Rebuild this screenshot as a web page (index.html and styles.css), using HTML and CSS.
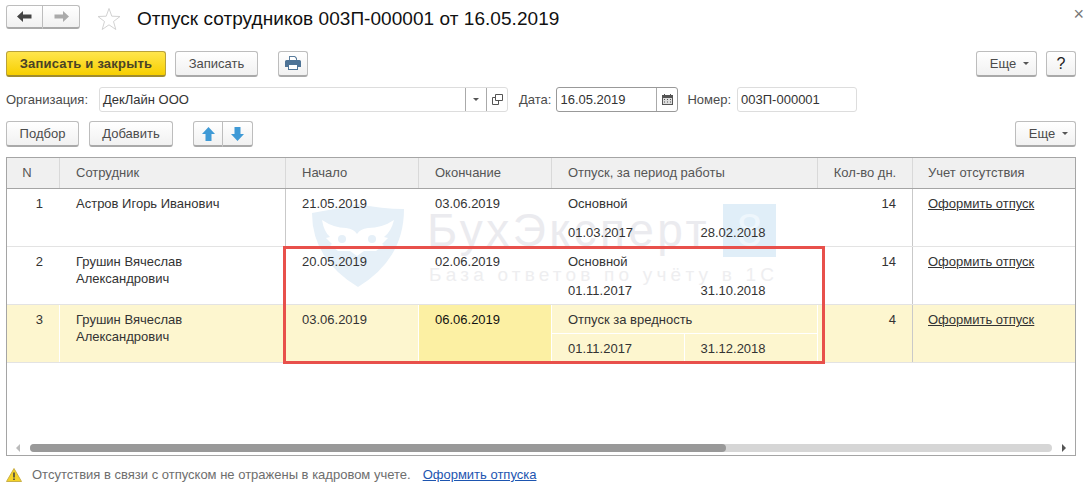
FILE: index.html
```html
<!DOCTYPE html>
<html lang="ru">

<head>
    <title>Отпуск сотрудников</title>
    <meta charset="UTF-8">
    <link rel="stylesheet" href="styles.css">
</head>

<body>
    <div class="topbar">
        <div class="btn-group nav-group">
            <button class="btn nav-btn">
                <svg width="15" height="11" viewBox="0 0 15 11"><path d="M0 5.500 6 0v3.500h8.500v4H6V11z" fill="#444"/></svg>
            </button>
            <button class="btn nav-btn">
                <svg width="15" height="11" viewBox="0 0 15 11"><path d="M15 5.500 9 0v3.500H.5v4H9V11z" fill="#aaa"/></svg>
            </button>
        </div>
        <svg class="star" width="24" height="24" viewBox="0 0 24 24"><path d="M12 1.500 14.800 9.200 23 9.500 16.500 14.500 18.800 22.500 12 17.800 5.200 22.500 7.500 14.500 1 9.500 9.200 9.200z" fill="#fff" stroke="#d2d2d2"/></svg>
        <h1 class="title">Отпуск сотрудников 003П-000001 от 16.05.2019</h1>
        <span class="close">×</span>
    </div>

    <div class="cmdbar">
        <button class="btn btn-main">Записать и закрыть</button>
        <button class="btn btn-save">Записать</button>
        <button class="btn btn-print">
            <svg width="16" height="15" viewBox="0 0 16 15"><path d="M4 0h6l2 2v2H4z" fill="#5b7d9c"/><path d="M5 1h4.500L11 2.500V4H5z" fill="#fff"/><path d="M1.500 4h13A1.500 1.500 0 0 1 16 5.500V11h-3v3H3v-3H0V5.500A1.500 1.500 0 0 1 1.500 4z" fill="#4d7396"/><path d="M4 9h8v4H4z" fill="#fff"/></svg>
        </button>
        <span class="spacer"></span>
        <button class="btn btn-more">Еще<i class="caret"></i></button>
        <button class="btn btn-help">?</button>
    </div>

    <div class="fields">
        <label class="field-label">Организация:</label>
        <div class="input input-org">
            <span class="input-text">ДекЛайн ООО</span>
            <span class="input-btn"><i class="caret"></i></span>
            <span class="input-btn">
                <svg width="11" height="11" viewBox="0 0 11 11"><path d="M3.500.5h7v6h-7zM3.500 3.500h-3v7h6v-4" fill="none" stroke="#555"/></svg>
            </span>
        </div>
        <label class="field-label label-date">Дата:</label>
        <div class="input input-date">
            <span class="input-text">16.05.2019</span>
            <span class="input-btn">
                <svg width="11" height="11" viewBox="0 0 11 11"><path d="M0 1h11v10H0z" fill="#555"/><path d="M1 4h9v6H1z" fill="#ddd"/><path d="M2 0h1v2H2zM8 0h1v2H8zM2 5h1v1H2zM5 5h1v1H5zM8 5h1v1H8zM2 7.500h1v1H2zM5 7.500h1v1H5zM8 7.500h1v1H8z" fill="#555"/></svg>
            </span>
        </div>
        <label class="field-label label-num">Номер:</label>
        <div class="input input-num">
            <span class="input-text">003П-000001</span>
        </div>
    </div>

    <div class="listbar">
        <button class="btn btn-pick">Подбор</button>
        <button class="btn btn-add">Добавить</button>
        <div class="btn-group move-group">
            <button class="btn move-btn">
                <svg width="13" height="14" viewBox="0 0 13 14"><path d="M6.500 0 13 7H9.500v7h-6V7H0z" fill="#3f9ad6"/></svg>
            </button>
            <button class="btn move-btn">
                <svg width="13" height="14" viewBox="0 0 13 14"><path d="M6.500 14 13 7H9.500V0h-6v7H0z" fill="#3f9ad6"/></svg>
            </button>
        </div>
        <span class="spacer"></span>
        <button class="btn btn-more">Еще<i class="caret"></i></button>
    </div>

    <div class="table">
        <div class="row head">
            <div class="cell c-n center">N</div>
            <div class="cell c-name">Сотрудник</div>
            <div class="cell c-start">Начало</div>
            <div class="cell c-end">Окончание</div>
            <div class="cell c-period">Отпуск, за период работы</div>
            <div class="cell c-days center">Кол-во дн.</div>
            <div class="cell c-link">Учет отсутствия</div>
        </div>

        <div class="row">
            <div class="cell c-n num">1</div>
            <div class="cell c-name">Астров Игорь Иванович</div>
            <div class="cell c-start">21.05.2019</div>
            <div class="cell c-end">03.06.2019</div>
            <div class="cell c-period">
                <div class="period-type">Основной</div>
                <div class="period-dates"><span>01.03.2017</span><span>28.02.2018</span></div>
            </div>
            <div class="cell c-days num">14</div>
            <div class="cell c-link"><a href="#">Оформить отпуск</a></div>
        </div>

        <div class="row">
            <div class="cell c-n num">2</div>
            <div class="cell c-name">Грушин Вячеслав Александрович</div>
            <div class="cell c-start">20.05.2019</div>
            <div class="cell c-end">02.06.2019</div>
            <div class="cell c-period">
                <div class="period-type">Основной</div>
                <div class="period-dates"><span>01.11.2017</span><span>31.10.2018</span></div>
            </div>
            <div class="cell c-days num">14</div>
            <div class="cell c-link"><a href="#">Оформить отпуск</a></div>
        </div>

        <div class="row selected">
            <div class="cell c-n num">3</div>
            <div class="cell c-name">Грушин Вячеслав Александрович</div>
            <div class="cell c-start">03.06.2019</div>
            <div class="cell c-end current">06.06.2019</div>
            <div class="cell c-period">
                <div class="period-type">Отпуск за вредность</div>
                <div class="period-dates"><span>01.11.2017</span><span>31.12.2018</span></div>
            </div>
            <div class="cell c-days num">4</div>
            <div class="cell c-link"><a href="#">Оформить отпуск</a></div>
        </div>

        <div class="watermark">
            <svg class="wm-shield" width="92" height="83" viewBox="0 0 92 83">
                <path d="M0 9Q24 5 46 0 70 5 92 5 92 55 46 83 0 55 0 9z" fill="#e6f0f8"/>
                <path d="M10 16Q22 24 34 24 42 25 45 30 48 25 56 24 70 24 82 16 79 28 72 33L76 34 70 40 72 41 64 47H52L45 52 38 47H26L18 41 20 40 14 34 18 33Q12 28 10 16z" fill="#fff"/>
                <circle cx="30" cy="35" r="4" fill="#e6f0f8"/>
                <circle cx="60" cy="35" r="4" fill="#e6f0f8"/>
            </svg>
            <div class="wm-text">
                <div class="wm-name"><span>БухЭксперт</span><span class="wm-eight">8</span></div>
                <div class="wm-sub">База ответов по учёту в 1С</div>
            </div>
        </div>

        <div class="scrollbar">
            <i class="sb-left"></i>
            <div class="sb-track"><div class="sb-thumb"></div></div>
            <i class="sb-right"></i>
        </div>
    </div>

    <div class="red-frame"></div>

    <div class="notice">
        <svg width="16" height="14" viewBox="0 0 16 14"><path d="M8 .5 15.500 13.500H.5z" fill="#f5d327" stroke="#c9b04a"/><path d="M7.200 4.500h1.600V9.500H7.200zM7.200 10.500h1.600v1.600H7.200z" fill="#444"/></svg>
        <span class="notice-text">Отсутствия в связи с отпуском не отражены в кадровом учете.</span>
        <a href="#" class="notice-link">Оформить отпуска</a>
    </div>
</body>

</html>
```

FILE: styles.css
```css
* {
    box-sizing: border-box;
}

body {
    margin: 0;
    padding: 5px 13px 0 6px;
    background: #fff;
    font-family: "Liberation Sans", Arial, sans-serif;
    font-size: 13px;
    color: #4b4b4b;
    position: relative;
    height: 490px;
    overflow: hidden;
}

.btn {
    height: 26px;
    padding: 0;
    background: linear-gradient(#fff, #f1f1f1);
    border: 1px solid #bdbdbd;
    border-bottom: 2px solid #a9a9a9;
    border-radius: 3px;
    font: inherit;
    color: #4b4b4b;
    display: inline-flex;
    align-items: center;
    justify-content: center;
}

.btn-group {
    display: flex;
}

.btn-group .btn:first-child {
    border-radius: 3px 0 0 3px;
}

.btn-group .btn:last-child {
    border-radius: 0 3px 3px 0;
    border-left: 0;
}

.spacer {
    flex: 1;
}

.topbar {
    display: flex;
    align-items: center;
    height: 24px;
}

.nav-btn {
    width: 37px;
    height: 24px;
}

.star {
    margin: 3px 0 0 17px;
}

.title {
    margin: 4px 0 0 16px;
    font-size: 19px;
    font-weight: normal;
    letter-spacing: 0.050px;
    color: #111;
}

.close {
    margin-left: auto;
    margin-right: -8px;
    align-self: flex-start;
    font-size: 18px;
    line-height: 18px;
    color: #777;
}

.cmdbar {
    display: flex;
    margin-top: 22px;
}

.btn-main {
    width: 160px;
    background: linear-gradient(#ffe64d, #f7cf00);
    border-color: #b9a23a;
    border-bottom-color: #a08c2e;
    font-weight: bold;
    letter-spacing: 0.200px;
    color: #4a4326;
}

.btn-save {
    width: 83px;
    margin-left: 9px;
}

.btn-print {
    width: 30px;
    margin-left: 20px;
}

.btn-more {
    width: 61px;
    padding-left: 6px;
}

.btn-help {
    width: 30px;
    margin-left: 9px;
    font-size: 16px;
    color: #222;
}

.caret {
    display: inline-block;
    margin-left: 7px;
    border: 3px solid transparent;
    border-top: 3px solid #555;
    border-bottom: 0;
}

.fields {
    display: flex;
    align-items: center;
    margin-top: 10px;
    height: 25px;
}

.input {
    display: flex;
    height: 25px;
    border: 1px solid #ddd;
    border-radius: 3px;
    background: #fff;
    color: #333;
}

.input-text {
    flex: 1;
    padding-left: 3px;
    line-height: 23px;
}

.input-btn {
    width: 21px;
    border-left: 1px solid #aaa;
    display: flex;
    align-items: center;
    justify-content: center;
}

.input-btn .caret {
    margin-left: 0;
}

.input-org {
    width: 409px;
    margin-left: 11px;
}

.label-date {
    margin-left: 11px;
}

.input-date {
    width: 122px;
    margin-left: 5px;
    border-color: #999;
}

.label-num {
    margin-left: 9px;
}

.input-num {
    width: 120px;
    margin-left: 6px;
}

.listbar {
    display: flex;
    margin-top: 9px;
}

.btn-pick {
    width: 73px;
}

.btn-add {
    width: 84px;
    margin-left: 10px;
}

.move-group {
    margin-left: 20px;
}

.move-btn {
    width: 30px;
}

.table {
    position: relative;
    margin-top: 10px;
    width: 1070px;
    height: 299px;
    border: 1px solid #a5a5a5;
    display: flex;
    flex-direction: column;
    color: #333;
}

.row {
    display: flex;
    height: 58px;
    border-bottom: 1px solid #e3e3e3;
    position: relative;
    z-index: 1;
}

.cell {
    padding: 6px 16px 0;
    border-right: 1px solid transparent;
    line-height: 17px;
}

.center {
    text-align: center;
    padding-left: 0;
    padding-right: 0;
}

.num {
    text-align: right;
}

.c-n {
    width: 53px;
}

.c-name {
    width: 226px;
    padding-right: 30px;
    border-right-color: #c9c9c9;
}

.c-start,
.c-end {
    width: 133px;
}

.c-period {
    width: 266px;
    padding: 6px 0 0;
}

.c-days {
    width: 95px;
    border-right-color: #c9c9c9;
}

.c-link {
    flex: 1;
    padding-left: 15px;
    border-right: 0;
}

.c-link a {
    color: #333;
}

.head {
    height: 31px;
    border-bottom: 1px solid #a5a5a5;
    background: #fff;
    color: #555;
}

.head .cell {
    height: 30px;
    padding-top: 6px;
    background: #f0f0f0;
    border-right-color: #d9d9d9;
}

.head .c-n {
    padding-right: 12px;
}

.head .c-period {
    padding-left: 16px;
}

.head .c-link {
    border-right: 0;
}

.period-type {
    height: 23px;
    padding-left: 16px;
    border-bottom: 1px solid transparent;
}

.period-dates {
    display: flex;
    line-height: 29px;
}

.period-dates span {
    width: 133px;
    height: 28px;
    padding-left: 16px;
}

.selected {
    background: #fdf6cf;
}

.selected .cell {
    border-right-color: #fff;
}

.selected .c-name,
.selected .c-days {
    border-right-color: #c9c9c9;
}

.selected .current {
    background: #fcf0a3;
    color: #111;
}

.selected .period-type {
    border-bottom-color: #fff;
}

.selected .period-dates span:first-child {
    border-right: 1px solid #fff;
}

.watermark {
    position: absolute;
    left: 305px;
    top: 46px;
    display: flex;
    z-index: 0;
}

.wm-text {
    margin-left: 23px;
}

.wm-name {
    width: 349px;
    font-size: 46px;
    line-height: 53px;
    letter-spacing: 3.500px;
    color: #ebebef;
    display: flex;
    justify-content: space-between;
}

.wm-eight {
    width: 53px;
    height: 53px;
    letter-spacing: 0;
    background: #e0eef8;
    color: #eef6fc;
    text-align: center;
}

.wm-sub {
    margin: 7px 0 0 2px;
    font-size: 19px;
    line-height: 22px;
    letter-spacing: 4.200px;
    color: #eeeef0;
    white-space: nowrap;
}

.scrollbar {
    position: absolute;
    left: 0;
    right: 0;
    bottom: 0;
    height: 12px;
    display: flex;
    align-items: center;
    padding: 0 9px 2px 0;
}

.sb-left {
    margin: 0 10px 0 9px;
    border: 4px solid transparent;
    border-right: 4px solid #bbb;
    border-left: 0;
}

.sb-track {
    flex: 1;
    height: 8px;
    background: #d6d6d6;
    border-radius: 4px;
}

.sb-thumb {
    width: 696px;
    height: 8px;
    background: #999;
    border-radius: 4px;
}

.sb-right {
    margin-left: 10px;
    border: 4px solid transparent;
    border-left: 4px solid #555;
    border-right: 0;
}

.red-frame {
    position: absolute;
    left: 283px;
    top: 246px;
    width: 542px;
    height: 118px;
    border: 3px solid #e8504b;
    z-index: 2;
}

.notice {
    display: flex;
    align-items: center;
    margin-top: 11px;
    color: #6e6e6e;
}

.notice-text {
    margin-left: 10px;
}

.notice-link {
    margin-left: 12px;
    color: #1d55b0;
}
```
